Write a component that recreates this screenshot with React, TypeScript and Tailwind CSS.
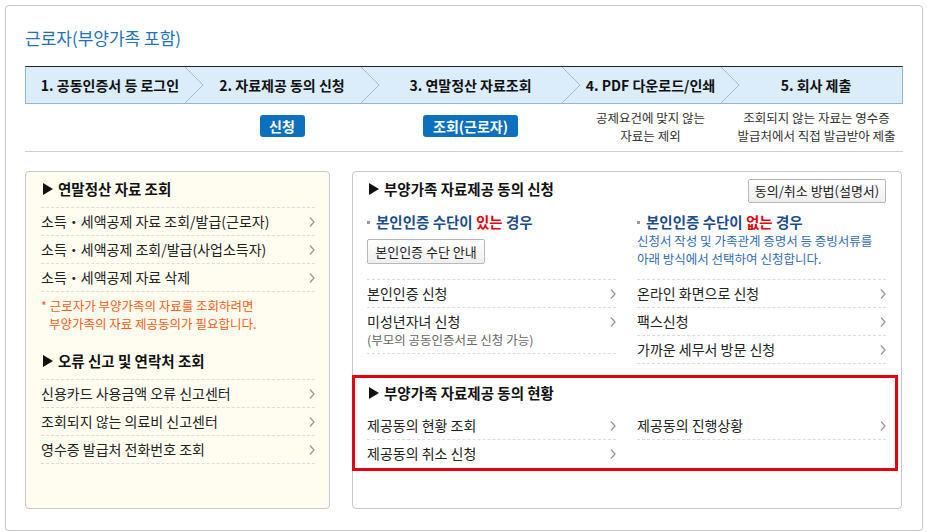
import type { ReactNode } from "react";

const STEPS = [
  "1. 공동인증서 등 로그인",
  "2. 자료제공 동의 신청",
  "3. 연말정산 자료조회",
  "4. PDF 다운로드/인쇄",
  "5. 회사 제출",
];

function Chev() {
  return (
    <svg width="6" height="10" viewBox="0 0 6 10" className="shrink-0">
      <path d="M1 0.5 L5 5 L1 9.5" fill="none" stroke="#9a9a9a" strokeWidth="1.3" />
    </svg>
  );
}

function Tri() {
  return (
    <svg width="10" height="12" viewBox="0 0 10 12" className="mr-[5px] shrink-0">
      <polygon points="0,0 10,6 0,12" fill="#111" />
    </svg>
  );
}

function Heading({ children }: { children: ReactNode }) {
  return (
    <div className="flex h-[18px] items-center pl-[2px] text-[14.5px] font-bold leading-[18px] text-[#111]">
      <Tri />
      {children}
    </div>
  );
}

function Item({ label, sub, last }: { label: string; sub?: string; last?: boolean }) {
  return (
    <div
      className={`flex items-start justify-between ${sub ? "h-[46px]" : "h-[28px]"} ${
        last ? "" : "border-b border-dashed border-[#dcdcdc]"
      }`}
    >
      <div className="pt-[4px]">
        <div className="text-[14px] leading-[19px] text-[#222]">{label}</div>
        {sub && <div className="text-[12.5px] leading-[18px] text-[#666]">{sub}</div>}
      </div>
      <div className="pt-[9px]">
        <Chev />
      </div>
    </div>
  );
}

function GrayButton({ children, className = "" }: { children: ReactNode; className?: string }) {
  return (
    <button
      type="button"
      className={`rounded-[2px] border border-[#b8b8b8] bg-gradient-to-b from-white to-[#efefef] text-[13px] text-[#222] ${className}`}
    >
      {children}
    </button>
  );
}

function SubHead({ word }: { word: string }) {
  return (
    <div className="flex h-[18px] items-center text-[14.5px] font-bold leading-[18px] text-[#1c4c8a]">
      <span className="mr-[6px] h-[3px] w-[3px] bg-[#9a9a9a]" />
      본인인증 수단이&nbsp;<span className="text-[#e3000f]">{word}</span>&nbsp;경우
    </div>
  );
}

export default function App() {
  return (
    <div className="h-[532px] w-[927px] bg-white p-[5px] font-['Noto_Sans_CJK_KR','Noto_Sans',sans-serif]">
      <div className="h-[526px] w-[918px] rounded-[4px] border border-[#c6c6c6] px-[19px] pt-[22px]">
        <h1 className="text-[17px] font-normal leading-[20px] text-[#2372b9]">근로자(부양가족 포함)</h1>

        <div className="mt-[18px] grid h-[38px] grid-cols-[168px_176px_201px_159px_172px] border border-[#93b5d6] border-t-[#222] bg-[#dbedfb]">
          {STEPS.map((s, i) => (
            <div key={s} className="relative flex h-[36px] items-center justify-center">
              <span className="text-[14px] font-bold text-[#111]">{s}</span>
              {i < STEPS.length - 1 && (
                <svg width="20" height="36" viewBox="0 0 20 36" className="absolute right-[-10px] top-0 z-10">
                  <path d="M1 0 L19 18 L1 36" fill="none" stroke="#9cbcdb" strokeWidth="1" />
                </svg>
              )}
            </div>
          ))}
        </div>

        <div className="grid h-[48px] grid-cols-[169px_176px_201px_159px_173px] border-b border-[#cfcfcf]">
          <div />
          <div className="flex justify-center pt-[11px]">
            <span className="flex h-[22px] w-[45px] items-center justify-center rounded-[3px] bg-[#0b70bd] text-[14px] font-bold text-white">
              신청
            </span>
          </div>
          <div className="flex justify-center pt-[11px]">
            <span className="flex h-[22px] w-[95px] items-center justify-center rounded-[3px] bg-[#0b70bd] text-[14px] font-bold text-white">
              조회(근로자)
            </span>
          </div>
          <div className="pt-[5px] text-center text-[12.5px] leading-[18px] text-[#333]">
            <div>공제요건에 맞지 않는</div>
            <div>자료는 제외</div>
          </div>
          <div className="pt-[5px] text-center text-[12.5px] leading-[18px] text-[#333]">
            <div>조회되지 않는 자료는 영수증</div>
            <div>발급처에서 직접 발급받아 제출</div>
          </div>
        </div>

        <div className="mt-[19px] flex gap-[22px]">
          <div className="h-[338px] w-[305px] rounded-[4px] border border-[#c8c8c8] bg-[#fffdf0] pl-[15px] pr-[14px] pt-[8px]">
            <Heading>연말정산 자료 조회</Heading>
            <div className="mt-[9px] border-t border-dashed border-[#dcdcdc]">
              <Item label="소득・세액공제 자료 조회/발급(근로자)" />
              <Item label="소득・세액공제 조회/발급(사업소득자)" />
              <Item label="소득・세액공제 자료 삭제" />
            </div>
            <div className="pt-[5px] text-[12.5px] leading-[18px] text-[#ff5b14]">
              <div>* 근로자가 부양가족의 자료를 조회하려면</div>
              <div className="pl-[8px]">부양가족의 자료 제공동의가 필요합니다.</div>
            </div>
            <div className="mt-[19px]">
              <Heading>오류 신고 및 연락처 조회</Heading>
            </div>
            <div className="mt-[9px] border-t border-dashed border-[#dcdcdc]">
              <Item label="신용카드 사용금액 오류 신고센터" />
              <Item label="조회되지 않는 의료비 신고센터" />
              <Item label="영수증 발급처 전화번호 조회" />
            </div>
          </div>

          <div className="h-[338px] w-[550px] rounded-[4px] border border-[#c8c8c8] bg-white pl-[14px] pr-[15px] pt-[8px]">
            <div className="flex items-start justify-between">
              <Heading>부양가족 자료제공 동의 신청</Heading>
              <GrayButton className="mt-[-1px] h-[24px] w-[138px]">동의/취소 방법(설명서)</GrayButton>
            </div>
            <div className="mt-[10px] grid grid-cols-[249px_249px] gap-x-[21px]">
              <div>
                <div className="h-[66px]">
                  <SubHead word="있는" />
                  <GrayButton className="mt-[8px] h-[25px] w-[118px]">본인인증 수단 안내</GrayButton>
                </div>
                <div className="border-t border-dashed border-[#dcdcdc]">
                  <Item label="본인인증 신청" />
                  <Item label="미성년자녀 신청" sub="(부모의 공동인증서로 신청 가능)" />
                </div>
              </div>
              <div>
                <div className="h-[66px]">
                  <SubHead word="없는" />
                  <div className="mt-[1px] text-[12.5px] leading-[18px] text-[#2f6cb0]">
                    <div>신청서 작성 및 가족관계 증명서 등 증빙서류를</div>
                    <div>아래 방식에서 선택하여 신청합니다.</div>
                  </div>
                </div>
                <div className="border-t border-dashed border-[#dcdcdc]">
                  <Item label="온라인 화면으로 신청" />
                  <Item label="팩스신청" />
                  <Item label="가까운 세무서 방문 신청" />
                </div>
              </div>
            </div>

            <div className="ml-[-15px] mr-[-12px] mt-[11px] border-[3px] border-[#e60012] pl-[12px] pr-[9px] pt-[6px]">
              <Heading>부양가족 자료제공 동의 현황</Heading>
              <div className="mt-[10px] grid grid-cols-[249px_249px] gap-x-[21px]">
                <div>
                  <Item label="제공동의 현황 조회" />
                  <Item label="제공동의 취소 신청" last />
                </div>
                <div>
                  <Item label="제공동의 진행상황" />
                </div>
              </div>
            </div>
          </div>
        </div>
      </div>
    </div>
  );
}
